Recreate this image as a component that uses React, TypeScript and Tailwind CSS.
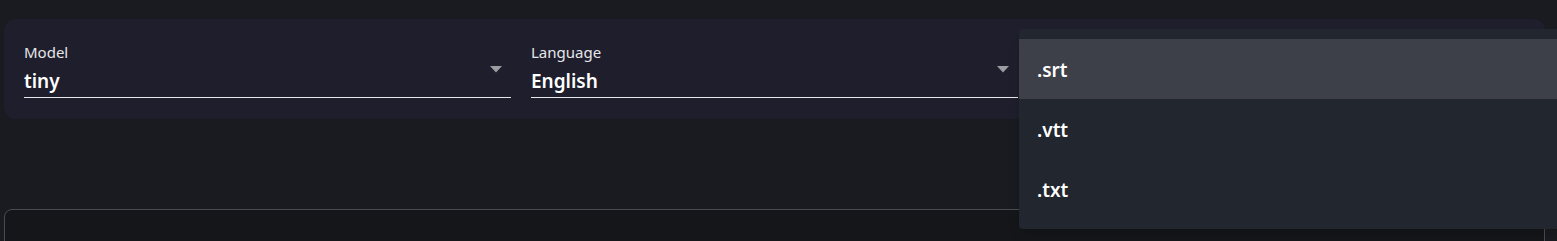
import React from 'react';

const FIELDS = [
  { label: 'Model', value: 'tiny' },
  { label: 'Language', value: 'English' },
];

const FORMATS = ['.srt', '.vtt', '.txt'];

function Field({ label, value }: { label: string; value: string }) {
  return (
    <div className="relative flex flex-col">
      <span className="text-[15px] leading-[18px] text-[#e6e6ea]">{label}</span>
      <div className="flex items-center justify-between h-[37px] border-b border-[#e8e8ec]">
        <span className="text-[19px] font-semibold leading-[24px] text-white mt-[3px]">{value}</span>
        <svg width="12" height="7" viewBox="0 0 12 7" className="self-start mt-[5px] mr-[9px]">
          <path d="M0 0 L12 0 L6 6.5 Z" fill="#9c9ca2" />
        </svg>
      </div>
    </div>
  );
}

export default function App() {
  return (
    <div
      className="relative h-[241px] w-full overflow-hidden bg-[#1a1b20]"
      style={{ fontFamily: '"Noto Sans", "Open Sans", sans-serif' }}
    >
      <div className="pt-[19px] pl-[4px] w-[1545px]">
        {/* Settings panel */}
        <div className="rounded-[12px] bg-[#1e1e2c] h-[100px] px-[20px] pt-[24px]">
          <div className="grid grid-cols-3 gap-[20px]">
            {FIELDS.map(f => (
              <Field key={f.label} label={f.label} value={f.value} />
            ))}
            {/* format select, hidden under the open menu */}
            <div className="h-[55px] border-b border-[#e8e8ec]" />
          </div>
        </div>

        {/* Output box */}
        <div className="mt-[90px] h-[200px] rounded-[8px] border border-[#4a4b50] bg-[#151619]" />
      </div>

      {/* Format menu */}
      <div className="absolute left-[1019px] top-[29px] w-[560px] py-[10px] bg-[#22262e] rounded-[4px] shadow-lg">
        {FORMATS.map((f, i) => (
          <div
            key={f}
            className={`flex items-center h-[60px] pl-[18px] pt-[3px] text-[19px] font-semibold text-white ${
              i === 0 ? 'bg-[#3e4049]' : ''
            }`}
          >
            {f}
          </div>
        ))}
      </div>
    </div>
  );
}
